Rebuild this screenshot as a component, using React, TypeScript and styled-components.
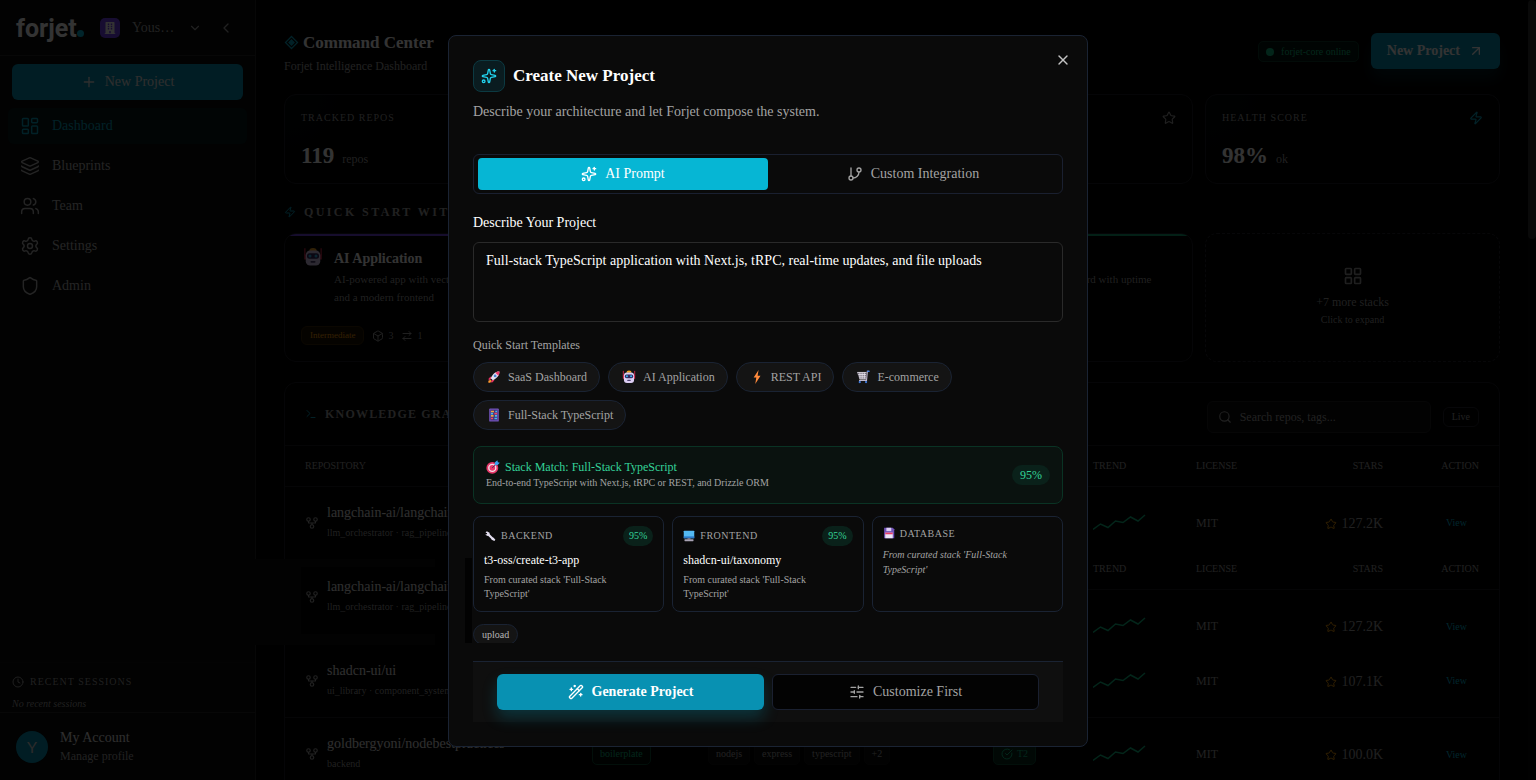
import React from 'react';
import styled, { createGlobalStyle } from 'styled-components';
import {
  ArrowRightLeft, ArrowUpRight, Box, ChevronDown, ChevronLeft, CircleCheckBig, Clock, GitBranch,
  GitFork, Layers, LayoutDashboard, LayoutGrid, Plus, Search, Settings, Shield, SlidersHorizontal,
  Sparkles, Star, Terminal, Users, WandSparkles, X, Zap,
} from 'lucide-react';
import { FaBuilding } from 'react-icons/fa';

const serif = `"Liberation Serif", "Times New Roman", serif`;

const GlobalStyle = createGlobalStyle`
  *, *::before, *::after { box-sizing: border-box; }
  html, body { margin: 0; background: #000; overflow: hidden; }
  body { font-family: ${serif}; font-size: 14px; line-height: 20px; color: #fff; }
  button, input, textarea { font: inherit; color: inherit; }
  button { cursor: pointer; }
  h1, h2, h3, p { margin: 0; font-weight: 400; }
  svg { flex: none; display: block; }
`;

/* ---------- emoji drawings ---------- */

type EmojiName = 'rocket' | 'robot' | 'bolt' | 'cart' | 'abacus' | 'target' | 'wrench' | 'computer' | 'floppy';

const emojiShapes: Record<EmojiName, React.ReactNode> = {
  rocket: (
    <>
      <path d="M4.5 7.5 2 9.5 1.8 12l3-1.8zM8.5 11.5 6.5 14l-2.6.2 1.9-3z" fill="#e0315f" />
      <path d="M3.8 11 1.5 12.6 1.6 14.6 3.6 14.5 5.2 12.4z" fill="#ff9a2e" />
      <path d="M14.2 1.8C10 1.6 6.4 4.6 4.3 9.4l2.4 2.4C11.5 9.6 14.4 6 14.2 1.8z" fill="#e4dff0" />
      <path d="M14.2 1.8c-1.7-.1-3.3.3-4.7 1.2l3.6 3.6c.8-1.5 1.2-3.1 1.1-4.8z" fill="#f0386b" />
      <circle cx="9.3" cy="6.8" r="1.6" fill="#4a86d8" />
    </>
  ),
  robot: (
    <>
      <path d="M1.500 1v5.500M14.500 1v5.500" stroke="#d9294f" strokeWidth="1" />
      <path d="M5 3.200a3 2.500 0 0 1 6 0z" fill="#f5a623" />
      <path d="M1 6h1.500v4H1zM13.500 6H15v4h-1.500z" fill="#d9294f" />
      <rect x="2.200" y="2.800" width="11.600" height="12" rx="3.500" fill="#dccdf2" />
      <rect x="3.200" y="5" width="9.600" height="4.400" rx="2" fill="#33265c" />
      <circle cx="5.600" cy="7.200" r="1.200" fill="#36b8f0" />
      <circle cx="10.400" cy="7.200" r="1.200" fill="#36b8f0" />
      <rect x="6" y="11.200" width="4" height="1.400" rx=".6" fill="#4d3f70" />
    </>
  ),
  bolt: <path d="M9.800 0 4.200 8.700h3L6 16l6-9.400H8.700z" fill="#ff8a3c" />,
  cart: (
    <>
      <path d="M1 2.500h11l-.6 8H4z" fill="#77717f" />
      <path d="M1.500 2.800h10.500M2.500 5.200h9M3.500 7.800h8M4.500 3V10M7 3v7M9.500 3v7M4 10.300h8" stroke="#ece9f2" strokeWidth=".9" />
      <path d="M15 1.500h-2L12 12H3.500" fill="none" stroke="#bdb6cc" strokeWidth="1.300" />
      <path d="M12.800 1.500H15.500" stroke="#3f7be0" strokeWidth="1.500" />
      <circle cx="4.300" cy="13.800" r="1.300" fill="#3f7be0" />
      <circle cx="11.500" cy="13.800" r="1.300" fill="#3f7be0" />
    </>
  ),
  abacus: (
    <>
      <rect x="2.500" y=".5" width="11" height="15" rx="1" fill="#7152b8" />
      <rect x="4" y="2" width="8" height="12" fill="#43307a" />
      <path d="M4.500 4h3.500M4.500 9h3" stroke="#f2a33a" strokeWidth="1.900" />
      <path d="M8.500 6.500h3M4.500 12h2.500" stroke="#ea4a6c" strokeWidth="1.900" />
      <path d="M4.500 6.500h2.500M9 9h2.500M8.500 12h3M9.500 4h2" stroke="#45b9ec" strokeWidth="1.900" />
    </>
  ),
  target: (
    <>
      <circle cx="7.200" cy="9" r="6.800" fill="#e8386a" />
      <circle cx="7.200" cy="9" r="4.800" fill="#f3dfe8" />
      <circle cx="7.200" cy="9" r="3.200" fill="#e8386a" />
      <path d="m7.200 9 4.300-4.300" stroke="#2c2350" strokeWidth="1" />
      <path d="m10 6 .2-3.400L13 .3l.6 2.200 2.200.5-2.500 2.700z" fill="#3aa0ee" />
    </>
  ),
  wrench: (
    <>
      <path d="m5.800 6 5.800 5.600" stroke="#e4dff0" strokeWidth="3" />
      <path d="M2 3.600 3.700 1.600 7.400 3.600l.2 2.600-2.600 1.700L1.600 6.200l2.600-.8-.4-1.400zM10 10.300l2.900.1 2.300 2.600-1.400 1.800-3.600-1.700z" fill="#e4dff0" />
    </>
  ),
  computer: (
    <>
      <rect x="1" y="1" width="14" height="10" rx=".8" fill="#53b9f2" />
      <path d="M1 8.500h14v2.500H1z" fill="#2a78c8" />
      <path d="M6 11h4v1.500H6z" fill="#8b8594" />
      <rect x="2" y="12.300" width="12" height="2.700" rx=".6" fill="#a9a3b5" />
    </>
  ),
  floppy: (
    <>
      <path d="M1.500 1h11.500L15 3v12H1.500z" fill="#7152b8" />
      <rect x="4.500" y="1" width="6.500" height="4.500" fill="#dccdf2" />
      <rect x="3" y="7.500" width="10" height="7.500" fill="#ece6f7" />
      <rect x="3" y="7.500" width="10" height="2.200" fill="#ea3d69" />
    </>
  ),
};

const Emoji = ({ name, size = 14 }: { name: EmojiName; size?: number }) => (
  <svg width={size} height={size} viewBox="0 0 16 16" aria-hidden="true">{emojiShapes[name]}</svg>
);

/* ---------- shell ---------- */

const Shell = styled.div`
  display: flex;
  height: 100vh;
  overflow: hidden;
`;

const Sidebar = styled.aside`
  width: 256px;
  flex: none;
  display: flex;
  flex-direction: column;
  background: #0a0a0a;
  border-right: 1px solid #262626;
`;

const SidebarHead = styled.div`
  height: 56px;
  display: flex;
  align-items: center;
  padding: 0 16px;
  border-bottom: 1px solid #262626;
  color: #b4b4b4;
`;

const Logo = styled.div`
  display: flex;
  align-items: baseline;
  width: 84px;
  padding-top: 3px;
  font: 700 25px/32px Roboto, sans-serif;
  color: #fff;
  &::after {
    content: '';
    width: 7px;
    height: 7px;
    border-radius: 50%;
    background: #06b6d4;
  }
`;

const Workspace = styled.button`
  flex: 1;
  display: flex;
  align-items: center;
  gap: 12px;
  padding: 0;
  border: 0;
  background: none;
  color: #a3a3a3;
  > span:nth-of-type(2) { flex: 1; text-align: left; }
`;

const WorkspaceBadge = styled.span`
  width: 20px;
  height: 20px;
  display: grid;
  place-items: center;
  border-radius: 5px;
  background: #7442f5;
  color: #fff;
  font-size: 12px;
`;

const IconButton = styled.button`
  display: grid;
  place-items: center;
  padding: 0;
  border: 0;
  background: none;
  color: #a3a3a3;
`;

const CollapseButton = styled(IconButton)`
  margin: 0 5px 0 16px;
`;

const SidebarNew = styled.button`
  height: 36px;
  margin: 8px 12px;
  display: flex;
  align-items: center;
  justify-content: center;
  gap: 8px;
  border: 0;
  border-radius: 6px;
  background: #0891b2;
  color: #e5e5e5;
`;

const Nav = styled.nav`
  flex: 1;
  display: flex;
  flex-direction: column;
  gap: 4px;
  padding: 0 8px;
`;

const NavLink = styled.a<{ $active?: boolean }>`
  height: 36px;
  display: flex;
  align-items: center;
  gap: 12px;
  padding: 0 12px;
  border-radius: 6px;
  text-decoration: none;
  color: ${p => (p.$active ? '#06a5c0' : '#b4b4b4')};
  background: ${p => (p.$active ? '#071a1d' : 'transparent')};
`;

const Sessions = styled.section`
  padding: 11px 12px 0;
  border-top: 1px solid #111;
  color: #9c9c9c;
  font-size: 10px;
  line-height: 16px;
  p { font-style: italic; margin-top: 6px; }
`;

const SessionsTitle = styled.h2`
  display: flex;
  align-items: center;
  gap: 6px;
  font-size: 10px;
  letter-spacing: 0.1em;
`;

const Account = styled.a`
  display: flex;
  align-items: center;
  gap: 12px;
  height: 68px;
  padding: 1px 16px 0;
  border-top: 1px solid #262626;
  color: #e5e5e5;
  text-decoration: none;
  line-height: 18px;
  small { display: block; font-size: 12px; color: #a3a3a3; }
`;

const Avatar = styled.span`
  width: 32px;
  height: 32px;
  display: grid;
  place-items: center;
  border-radius: 50%;
  background: #0891b2;
  font: 16px/20px Lato, sans-serif;
  color: #d4d4d4;
`;

/* ---------- dashboard ---------- */

const Main = styled.main`
  flex: 1;
  min-width: 0;
  padding: 33px 28px 0;
`;

const ScrollTrack = styled.div`
  width: 8px;
  flex: none;
  background: #050505;
`;

const ScrollThumb = styled.div`
  height: 239px;
  border-radius: 4px;
  background: #2e2e2e;
`;

const TopBar = styled.header`
  display: flex;
  align-items: flex-start;
  gap: 12px;
  height: 61px;
`;

const Heading = styled.div`
  flex: 1;
  color: #a3a3a3;
  font-size: 12px;
  p { margin-top: 5px; line-height: 18px; }
`;

const PageTitle = styled.h1`
  display: flex;
  align-items: center;
  gap: 4px;
  font-size: 17px;
  line-height: 19px;
  font-weight: 700;
  color: #fff;
`;

const Online = styled.span`
  height: 21px;
  margin-top: 8px;
  display: flex;
  align-items: center;
  gap: 7px;
  padding: 0 7px;
  border: 1px solid #0a3a28;
  border-radius: 5px;
  background: #04180f;
  color: #10b981;
  font-size: 10px;
  &::before {
    content: '';
    width: 8px;
    height: 8px;
    border-radius: 50%;
    background: #10b981;
  }
`;

const TopNew = styled.button`
  height: 36px;
  display: flex;
  align-items: center;
  gap: 8px;
  padding: 0 16px;
  border: 0;
  border-radius: 6px;
  background: #0891b2;
  color: #fff;
  font-weight: 700;
  box-shadow: 0 10px 15px rgba(8, 145, 178, 0.2);
`;

const Grid = styled.div`
  display: grid;
  grid-template-columns: repeat(4, 1fr);
  gap: 12px;
`;

const Card = styled.article`
  position: relative;
  overflow: hidden;
  border: 1px solid #1c1c24;
  border-radius: 12px;
  padding: 0 16px;
  color: #9c9c9c;
`;

const StatCard = styled(Card)`
  height: 90px;
  padding-top: 15px;
  background: radial-gradient(circle at 0 0, #04080a 0, #000 90px);
`;

const StatHead = styled.div`
  display: flex;
  justify-content: space-between;
  align-items: center;
  height: 16px;
  font-size: 10px;
  letter-spacing: 0.1em;
`;

const StatValue = styled.p`
  display: flex;
  align-items: baseline;
  gap: 8px;
  margin-top: 15px;
  font-size: 12px;
  line-height: 30px;
  strong { font-size: 23px; color: #fff; }
`;

const SectionTitle = styled.h2<{ $wide?: boolean }>`
  display: flex;
  align-items: center;
  gap: 8px;
  font-size: 12px;
  line-height: 20px;
  font-weight: 700;
  color: #a3a3a3;
  white-space: nowrap;
  letter-spacing: ${p => (p.$wide ? '0.2em' : '0.1em')};
  svg { color: #0aa5c4; }
`;

const QuickStart = styled.section`
  margin: 18px 0 20px;
  ${Grid} { margin-top: 11px; }
`;

const StackCard = styled(Card)<{ $accent: string }>`
  height: 129px;
  padding-top: 15px;
  &::before {
    content: '';
    position: absolute;
    inset: 0 0 auto;
    height: 2px;
    background: ${p => p.$accent};
  }
`;

const StackTop = styled.div`
  display: flex;
  gap: 11px;
  height: 77px;
  padding-left: 2px;
  font-size: 11px;
  line-height: 18px;
  h3 { font-size: 14px; line-height: 20px; font-weight: 700; color: #fff; margin-bottom: 1px; }
  > svg { margin-top: -2px; }
`;

const StackMeta = styled.div`
  display: flex;
  align-items: center;
  gap: 8px;
  font-size: 10px;
  line-height: 17px;
  span { display: flex; align-items: center; gap: 4px; }
  b {
    padding: 0 8px;
    border: 1px solid #3b2506;
    border-radius: 6px;
    background: #1a1003;
    color: #f59e0b;
    font-size: 9px;
    font-weight: 400;
  }
`;

const MoreCard = styled.button`
  display: flex;
  flex-direction: column;
  align-items: center;
  justify-content: center;
  border: 1px dashed #26262e;
  border-radius: 12px;
  background: none;
  color: #9c9c9c;
  font-size: 12px;
  line-height: 18px;
  svg { margin-bottom: 7px; }
  small { font-size: 10px; }
`;

const Knowledge = styled.section`
  border: 1px solid #1c1c24;
  border-radius: 12px;
`;

const KnowledgeHead = styled.div`
  height: 62px;
  display: flex;
  align-items: center;
  gap: 12px;
  padding: 6px 20px 0;
  h2 { flex: 1; align-self: flex-start; margin-top: 15px; }
`;

const SearchBox = styled.label`
  width: 224px;
  height: 32px;
  display: flex;
  align-items: center;
  gap: 8px;
  padding: 0 10px;
  border: 1px solid #1e1e22;
  border-radius: 6px;
  background: #0a0a0a;
  color: #a3a3a3;
  font-size: 12px;
  input {
    min-width: 0;
    flex: 1;
    padding: 0;
    border: 0;
    outline: 0;
    background: none;
  }
  input::placeholder { color: #a3a3a3; opacity: 1; }
`;

const Live = styled.span`
  padding: 0 8px;
  border: 1px solid #242430;
  border-radius: 6px;
  color: #a3a3a3;
  font-size: 10px;
  line-height: 18px;
`;

const Table = styled.table`
  width: 100%;
  table-layout: fixed;
  border-collapse: collapse;
  color: #a3a3a3;
`;

const HeadCell = styled.th<{ $right?: boolean }>`
  height: 41px;
  padding: 0 20px;
  border-top: 1px solid #1a1a1e;
  border-bottom: 1px solid #1a1a1e;
  font-size: 10px;
  line-height: 14px;
  font-weight: 400;
  text-align: ${p => (p.$right ? 'right' : 'left')};
`;

/* Header cell of the repeated group, which has no rule above it. */
const InnerHeadCell = styled(HeadCell)`
  border-top: 0;
`;

const Cell = styled.td<{ $right?: boolean }>`
  padding: 0 0 0 20px;
  font-size: 12px;
  white-space: nowrap;
  ${p => p.$right && 'padding-right: 20px; text-align: right;'}
`;

const Row = styled.tr<{ $h: number; $shift?: number; $line?: boolean }>`
  height: ${p => p.$h}px;
  ${p => p.$line && 'border-bottom: 1px solid #1a1a1e;'}
  > ${Cell} { padding-top: ${p => p.$shift || 0}px; }
`;

/* Highlighted repository cell: a panel that reaches over the sidebar's edge. */
const PinnedCell = styled(Cell)`
  && { padding-top: 0; }
  position: relative;
  &::before {
    content: '';
    position: absolute;
    inset: 10px auto 0 -30px;
    width: 180px;
    background: #000;
    border: solid #0a0a0a;
    border-width: 8px 0 11px 46px;
  }
`;

const Repo = styled.div`
  position: relative;
  display: flex;
  align-items: center;
  gap: 8px;
  line-height: 20px;
  b { display: block; font-size: 14px; font-weight: 400; color: #e5e5e5; }
  small { display: block; font-size: 10px; color: #9c9c9c; }
`;

const Stars = styled.span`
  display: inline-flex;
  align-items: center;
  gap: 4px;
  font-size: 14px;
  line-height: 18px;
  vertical-align: middle;
  svg { color: #f59e0b; }
`;

const ViewLink = styled.a`
  margin-right: 12px;
  color: #06b6d4;
  font-size: 10px;
  text-decoration: none;
`;

const Tag = styled.span<{ $green?: boolean; $filled?: boolean }>`
  display: inline-flex;
  align-items: center;
  gap: 4px;
  height: 22px;
  margin-right: 4px;
  padding: 0 7px;
  border: 1px solid ${p => (p.$green ? '#0a4a33' : '#121212')};
  border-radius: 5px;
  background: ${p => (p.$filled ? '#05291c' : p.$green ? '#020d08' : '#0c0c0c')};
  color: ${p => (p.$green ? '#10b981' : '#a3a3a3')};
  font-size: 10px;
`;

/* ---------- dialog ---------- */

const Overlay = styled.div`
  position: fixed;
  inset: 0;
  z-index: 10;
  display: flex;
  align-items: flex-start;
  justify-content: center;
  padding: 35px 16px;
  background: rgba(0, 0, 0, 0.8);
`;

const Dialog = styled.section`
  position: relative;
  width: 100%;
  max-width: 640px;
  padding: 24px;
  border: 1px solid #1a2333;
  border-radius: 8px;
  background: #0a0a0a;
`;

const CloseButton = styled(IconButton)`
  position: absolute;
  top: 16px;
  right: 16px;
  color: #c4c4c4;
`;

const DialogHead = styled.header`
  display: grid;
  gap: 8px;
  margin-bottom: 30px;
  color: #a3a3a3;
  line-height: 24px;
`;

const DialogTitle = styled.h2`
  display: flex;
  align-items: center;
  gap: 8px;
  font-size: 17px;
  font-weight: 700;
  color: #fff;
`;

const TitleIcon = styled.span`
  width: 32px;
  height: 32px;
  display: grid;
  place-items: center;
  border: 1px solid #0c3a42;
  border-radius: 8px;
  background: #0a1c20;
  color: #22d3ee;
`;

const Tabs = styled.div`
  display: grid;
  grid-template-columns: 1fr 1fr;
  height: 40px;
  padding: 3px 4px;
  border: 1px solid #1a2030;
  border-radius: 6px;
`;

const Tab = styled.button<{ $active?: boolean }>`
  display: flex;
  align-items: center;
  justify-content: center;
  gap: 8px;
  border: 0;
  border-radius: 4px;
  background: ${p => (p.$active ? '#06b6d4' : 'transparent')};
  color: ${p => (p.$active ? '#fff' : '#a3a3a3')};
`;

const FieldLabel = styled.label`
  display: block;
  margin: 20px 0 10px;
  line-height: 18px;
`;

const Prompt = styled.textarea`
  display: block;
  width: 100%;
  height: 80px;
  padding: 8px 12px;
  border: 1px solid #2a2a2a;
  border-radius: 6px;
  background: #0a0a0a;
  line-height: 20px;
  resize: none;
  outline: 0;
`;

const SmallLabel = styled.h3`
  margin: 15px 0 9px;
  font-size: 12px;
  line-height: 16px;
  color: #a3a3a3;
`;

const Chips = styled.div`
  display: flex;
  flex-wrap: wrap;
  gap: 8px;
`;

const Chip = styled.button`
  height: 30px;
  display: flex;
  align-items: center;
  gap: 7px;
  padding: 0 12px 0 13px;
  border: 1px solid #1a2333;
  border-radius: 15px;
  background: #141414;
  color: #a3a3a3;
  font-size: 12px;
`;

const Match = styled.section`
  display: flex;
  align-items: center;
  justify-content: space-between;
  height: 58px;
  margin: 16px 0 12px;
  padding: 0 12px;
  border: 1px solid #0a3324;
  border-radius: 8px;
  background: #0a120f;
  color: #a3a3a3;
  font-size: 10px;
  line-height: 16px;
  h3 {
    display: flex;
    align-items: center;
    gap: 5px;
    font-size: 12px;
    color: #34d399;
  }
`;

const Score = styled.span<{ $small?: boolean }>`
  padding: 0 ${p => (p.$small ? 6 : 8)}px;
  border-radius: 10px;
  background: #0a211a;
  color: #34d399;
  font-size: ${p => (p.$small ? 10 : 12)}px;
  line-height: 20px;
`;

const Layer = styled.div`
  position: relative;
  display: grid;
  grid-template-columns: repeat(3, 1fr);
  gap: 8px;
  &::before {
    content: '';
    position: absolute;
    left: -8px;
    top: 42px;
    width: 7px;
    height: 85px;
    background: #020202;
  }
`;

const LayerCard = styled.article<{ $empty?: boolean }>`
  height: 96px;
  padding: ${p => (p.$empty ? 8 : 9)}px 10px;
  border: 1px solid #1a2333;
  border-radius: 8px;
  background: #0a0a0a;
  color: #a3a3a3;
  font-size: 10px;
  line-height: ${p => (p.$empty ? 15 : 14)}px;
  font-style: ${p => (p.$empty ? 'italic' : 'normal')};
  strong {
    display: block;
    margin: 6px 0 5px;
    font-size: 12px;
    line-height: 16px;
    font-weight: 400;
    color: #fff;
  }
  p { max-width: 150px; }
`;

const LayerHead = styled.h3<{ $tall?: boolean }>`
  display: flex;
  align-items: center;
  gap: 5px;
  height: ${p => (p.$tall ? 20 : 16)}px;
  margin-bottom: ${p => (p.$tall ? 0 : 6)}px;
  font-size: 10px;
  font-style: normal;
  letter-spacing: 0.05em;
  ${Score} { margin-left: auto; letter-spacing: 0; }
`;

const Features = styled.div`
  height: 19px;
  margin: 12px 0 18px;
  overflow: hidden;
`;

const Feature = styled.span`
  display: inline-block;
  padding: 0 8px;
  border: 1px solid #1a2333;
  border-radius: 11px;
  background: #141414;
  color: #b4b4b4;
  font-size: 10px;
  line-height: 19px;
  vertical-align: top;
`;

const Footer = styled.footer`
  display: grid;
  grid-template-columns: 1fr 1fr;
  gap: 8px;
  padding: 12px 24px;
  border-top: 1px solid #1a2333;
  background: #0f0f0f;
`;

const Action = styled.button<{ $primary?: boolean }>`
  height: 36px;
  display: flex;
  align-items: center;
  justify-content: center;
  gap: 8px;
  border-radius: 6px;
  border: ${p => (p.$primary ? '0' : '1px solid #1a2030')};
  background: ${p => (p.$primary ? '#0891b2' : '#030303')};
  color: ${p => (p.$primary ? '#fff' : '#a3a3a3')};
  font-weight: ${p => (p.$primary ? 700 : 400)};
  box-shadow: ${p => (p.$primary ? '0 8px 15px rgba(6, 182, 212, 0.22)' : 'none')};
`;

/* ---------- pieces ---------- */

const navItems = [
  { label: 'Dashboard', icon: LayoutDashboard },
  { label: 'Blueprints', icon: Layers },
  { label: 'Team', icon: Users },
  { label: 'Settings', icon: Settings },
  { label: 'Admin', icon: Shield },
];

const templates: { label: string; emoji: EmojiName }[] = [
  { label: 'SaaS Dashboard', emoji: 'rocket' },
  { label: 'AI Application', emoji: 'robot' },
  { label: 'REST API', emoji: 'bolt' },
  { label: 'E-commerce', emoji: 'cart' },
  { label: 'Full-Stack TypeScript', emoji: 'abacus' },
];

const Sparkline = () => (
  <svg width="53" height="18" viewBox="0 0 53 18" fill="none" stroke="#10b981" strokeWidth="1.5">
    <path d="M0 15.500 7.500 10 15 13.500 22.500 7 30 8.500 37.500 3 45 7 52 1" />
  </svg>
);

const RepoName = ({ name, meta }: { name: string; meta: string }) => (
  <Repo>
    <GitFork size={14} />
    <div><b>{name}</b><small>{meta}</small></div>
  </Repo>
);

const RowEnd = ({ stars }: { stars: string }) => (
  <>
    <Cell><Sparkline /></Cell>
    <Cell>MIT</Cell>
    <Cell $right><Stars><Star size={12} />{stars}</Stars></Cell>
    <Cell $right><ViewLink href="#view">View</ViewLink></Cell>
  </>
);

const Empty = () => <><Cell /><Cell /><Cell /></>;

const RepoTable = () => (
  <Table>
    <colgroup>
      <col style={{ width: 287 }} />
      <col style={{ width: 116 }} />
      <col />
      <col style={{ width: 100 }} />
      <col style={{ width: 103 }} />
      <col style={{ width: 100 }} />
      <col style={{ width: 127 }} />
      <col style={{ width: 96 }} />
    </colgroup>
    <thead>
      <tr>
        <HeadCell>REPOSITORY</HeadCell><HeadCell /><HeadCell /><HeadCell />
        <HeadCell>TREND</HeadCell>
        <HeadCell>LICENSE</HeadCell>
        <HeadCell $right>STARS</HeadCell>
        <HeadCell $right>ACTION</HeadCell>
      </tr>
    </thead>
    <tbody>
      <Row $h={62} $shift={10}>
        <Cell><RepoName name="langchain-ai/langchain" meta="llm_orchestrator · rag_pipeline" /></Cell>
        <Empty />
        <RowEnd stars="127.2K" />
      </Row>
      <tr>
        <PinnedCell rowSpan={2}>
          <RepoName name="langchain-ai/langchain" meta="llm_orchestrator · rag_pipeline" />
        </PinnedCell>
        <Empty />
        <InnerHeadCell>TREND</InnerHeadCell>
        <InnerHeadCell>LICENSE</InnerHeadCell>
        <InnerHeadCell $right>STARS</InnerHeadCell>
        <InnerHeadCell $right>ACTION</InnerHeadCell>
      </tr>
      <Row $h={55} $shift={18}>
        <Empty />
        <RowEnd stars="127.2K" />
      </Row>
      <Row $h={73} $line>
        <Cell><RepoName name="shadcn-ui/ui" meta="ui_library · component_system" /></Cell>
        <Empty />
        <RowEnd stars="107.1K" />
      </Row>
      <Row $h={73}>
        <Cell><RepoName name="goldbergyoni/nodebestpractices" meta="backend" /></Cell>
        <Cell><Tag $green>boilerplate</Tag></Cell>
        <Cell><Tag>nodejs</Tag><Tag>express</Tag><Tag>typescript</Tag><Tag>+2</Tag></Cell>
        <Cell><Tag $green $filled><CircleCheckBig size={12} />T2</Tag></Cell>
        <RowEnd stars="100.0K" />
      </Row>
    </tbody>
  </Table>
);

const Dashboard = () => (
  <Main>
    <TopBar>
      <Heading>
        <PageTitle>
          <svg width="15" height="15" viewBox="0 0 15 15" fill="none" stroke="#0aa5c4" strokeWidth="1.300">
            <path d="M7.500 1.500 13.500 7.500l-6 6-6-6z" />
            <path d="m7.500 5 2.500 2.500-2.500 2.500L5 7.500z" fill="#0aa5c4" />
          </svg>
          Command Center
        </PageTitle>
        <p>Forjet Intelligence Dashboard</p>
      </Heading>
      <Online>forjet-core online</Online>
      <TopNew>New Project <ArrowUpRight size={16} /></TopNew>
    </TopBar>

    <Grid>
      <StatCard>
        <StatHead>TRACKED REPOS</StatHead>
        <StatValue><strong>119</strong> repos</StatValue>
      </StatCard>
      <StatCard />
      <StatCard><StatHead><span /><Star size={14} /></StatHead></StatCard>
      <StatCard>
        <StatHead>HEALTH SCORE <Zap size={14} color="#0aa5c4" /></StatHead>
        <StatValue><strong>98%</strong> ok</StatValue>
      </StatCard>
    </Grid>

    <QuickStart>
      <SectionTitle $wide><Zap size={12} />QUICK START WITH</SectionTitle>
      <Grid>
        <StackCard $accent="#6d42e0">
          <StackTop>
            <Emoji name="robot" size={20} />
            <div>
              <h3>AI Application</h3>
              <p>AI-powered app with vector search<br />and a modern frontend</p>
            </div>
          </StackTop>
          <StackMeta><b>Intermediate</b><span><Box size={12} />3</span><span><ArrowRightLeft size={12} />1</span></StackMeta>
        </StackCard>
        <StackCard $accent="#0891b2" />
        <StackCard $accent="#10a070">
          <StackTop>
            <Emoji name="computer" size={20} />
            <div>
              <h3>Monitoring</h3>
              <p>Production monitoring dashboard with uptime</p>
            </div>
          </StackTop>
        </StackCard>
        <MoreCard><LayoutGrid size={20} />+7 more stacks<small>Click to expand</small></MoreCard>
      </Grid>
    </QuickStart>

    <Knowledge>
      <KnowledgeHead>
        <SectionTitle><Terminal size={12} />KNOWLEDGE GRAPH</SectionTitle>
        <SearchBox>
          <Search size={14} />
          <input type="search" placeholder="Search repos, tags..." aria-label="Search repos" />
        </SearchBox>
        <Live>Live</Live>
      </KnowledgeHead>
      <RepoTable />
    </Knowledge>
  </Main>
);

const LayerItem = ({ emoji, label, repo }: { emoji: EmojiName; label: string; repo?: string }) => (
  <LayerCard $empty={!repo}>
    <LayerHead $tall={!!repo}>
      <Emoji name={emoji} size={12} />
      {label}
      {repo && <Score $small>95%</Score>}
    </LayerHead>
    {repo && <strong>{repo}</strong>}
    <p>From curated stack 'Full-Stack TypeScript'</p>
  </LayerCard>
);

const CreateProject = () => (
  <Overlay>
    <Dialog role="dialog" aria-labelledby="dialog-title">
      <CloseButton aria-label="Close"><X size={16} /></CloseButton>
      <DialogHead>
        <DialogTitle id="dialog-title"><TitleIcon><Sparkles size={16} /></TitleIcon>Create New Project</DialogTitle>
        <p>Describe your architecture and let Forjet compose the system.</p>
      </DialogHead>
      <Tabs role="tablist">
        <Tab role="tab" aria-selected="true" $active><Sparkles size={16} />AI Prompt</Tab>
        <Tab role="tab" aria-selected="false"><GitBranch size={16} />Custom Integration</Tab>
      </Tabs>
      <FieldLabel htmlFor="prompt">Describe Your Project</FieldLabel>
      <Prompt
        id="prompt"
        spellCheck={false}
        defaultValue="Full-stack TypeScript application with Next.js, tRPC, real-time updates, and file uploads"
      />
      <SmallLabel>Quick Start Templates</SmallLabel>
      <Chips>
        {templates.map(t => <Chip key={t.label}><Emoji name={t.emoji} />{t.label}</Chip>)}
      </Chips>
      <Match>
        <div>
          <h3><Emoji name="target" />Stack Match: Full-Stack TypeScript</h3>
          <p>End-to-end TypeScript with Next.js, tRPC or REST, and Drizzle ORM</p>
        </div>
        <Score>95%</Score>
      </Match>
      <Layer>
        <LayerItem emoji="wrench" label="BACKEND" repo="t3-oss/create-t3-app" />
        <LayerItem emoji="computer" label="FRONTEND" repo="shadcn-ui/taxonomy" />
        <LayerItem emoji="floppy" label="DATABASE" />
      </Layer>
      <Features><Feature>upload</Feature></Features>
      <Footer>
        <Action $primary><WandSparkles size={16} />Generate Project</Action>
        <Action><SlidersHorizontal size={16} />Customize First</Action>
      </Footer>
    </Dialog>
  </Overlay>
);

export default function App() {
  return (
    <>
      <GlobalStyle />
      <Shell>
        <Sidebar>
          <SidebarHead>
            <Logo>forjet</Logo>
            <Workspace>
              <WorkspaceBadge><FaBuilding /></WorkspaceBadge>
              <span>Yous…</span>
              <ChevronDown size={14} />
            </Workspace>
            <CollapseButton aria-label="Collapse sidebar"><ChevronLeft size={16} /></CollapseButton>
          </SidebarHead>
          <SidebarNew><Plus size={16} />New Project</SidebarNew>
          <Nav>
            {navItems.map(({ label, icon: Icon }, i) => (
              <NavLink key={label} href={`#${label.toLowerCase()}`} $active={i === 0}>
                <Icon size={20} strokeWidth={1.75} />{label}
              </NavLink>
            ))}
          </Nav>
          <Sessions>
            <SessionsTitle><Clock size={12} />RECENT SESSIONS</SessionsTitle>
            <p>No recent sessions</p>
          </Sessions>
          <Account href="#account">
            <Avatar>Y</Avatar>
            <span>My Account<small>Manage profile</small></span>
          </Account>
        </Sidebar>
        <Dashboard />
        <ScrollTrack><ScrollThumb /></ScrollTrack>
      </Shell>
      <CreateProject />
    </>
  );
}
